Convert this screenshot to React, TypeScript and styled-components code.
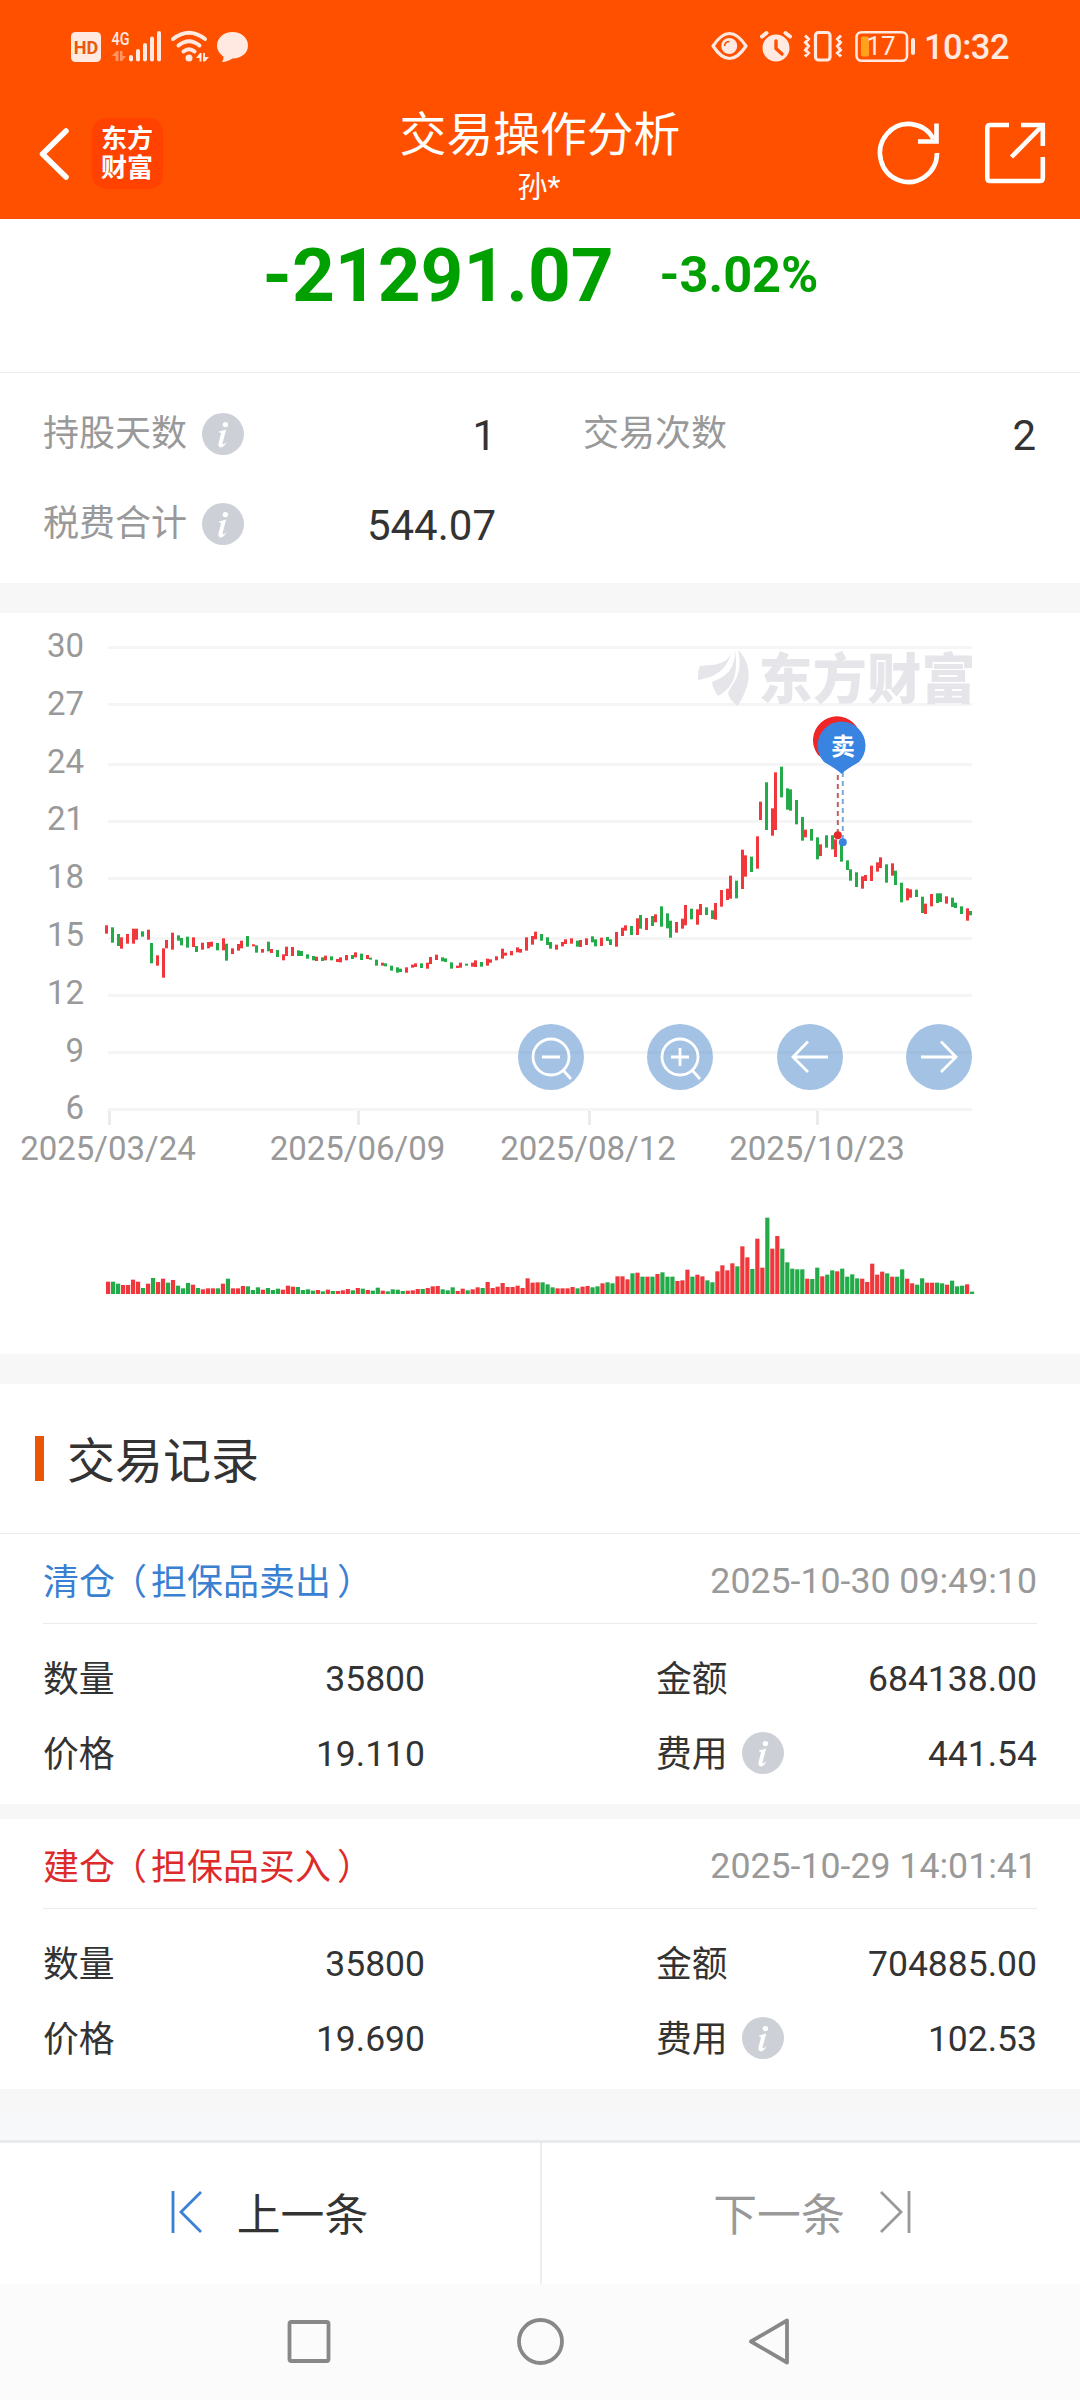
import React from 'react';
import styled, { createGlobalStyle } from 'styled-components';

const GlobalStyle = createGlobalStyle`
  * { box-sizing: border-box; }
  body {
    margin: 0;
    background: #fff;
    font-family: Roboto, "Noto Sans CJK SC", sans-serif;
    color: #333;
  }
`;

const Page = styled.div`
  width: 1080px;
  height: 2400px;
  display: flex;
  flex-direction: column;
  overflow: hidden;
  background: #fff;
`;

/* ---------- header ---------- */

const Header = styled.header`
  height: 219px;
  flex: none;
  background: #ff5000;
  color: #fff;
`;

const StatusBar = styled.div`
  height: 92px;
  display: flex;
  justify-content: space-between;
  padding: 0 0 0 70px;
`;

const StatusIcons = styled.svg`
  display: block;
  height: 92px;
`;

const StatusGroup = styled.div`
  display: flex;
`;

const Clock = styled.span`
  width: 156px;
  font-size: 34.5px;
  font-weight: 500;
  line-height: 94px;
  letter-spacing: -0.5px;
  color: #ffe9e0;
`;

const TitleBar = styled.div`
  height: 127px;
  display: grid;
  grid-template-columns: 380px 1fr 380px;
`;

const TitleLeft = styled.div`
  display: flex;
  align-items: flex-start;
  padding: 26px 0 0 36px;
`;

const BackIcon = styled.svg`
  width: 36px;
  height: 72px;
  margin-right: 20px;
`;

const BrandTile = styled.div`
  width: 71px;
  height: 71px;
  border-radius: 14px;
  background: #ff4200;
  font-size: 26px;
  font-weight: 700;
  line-height: 29px;
  padding: 7px 0 0 9px;
`;

const TitleText = styled.div`
  text-align: center;
  padding-top: 13px;
`;

const Title = styled.h1`
  margin: 0;
  font-size: 46.8px;
  font-weight: 400;
  line-height: 60px;
  white-space: nowrap;
`;

const Account = styled.div`
  font-size: 30px;
  line-height: 40px;
  margin-top: 2px;
  padding-right: 2px;
`;

const TitleActions = styled.svg`
  width: 380px;
  height: 127px;
`;

/* ---------- profit summary ---------- */

const Profit = styled.section`
  height: 154px;
  flex: none;
  display: flex;
  align-items: baseline;
  justify-content: center;
  gap: 46px;
  padding: 13px 0 0 1px;
  color: #00a000;
  font-weight: 700;
  border-bottom: 1px solid #ebebeb;
`;

const Amount = styled.span`
  font-size: 74.7px;
  line-height: 88px;
`;

const Percent = styled.span`
  font-size: 50.5px;
  position: relative;
  top: -9px;
`;

const Stats = styled.section`
  height: 210px;
  flex: none;
  display: grid;
  grid-template-columns: 453px 453px;
  grid-template-rows: 90px 90px;
  column-gap: 87px;
  padding: 16px 43px 14px;
`;

const StatCell = styled.div`
  display: flex;
  align-items: center;
  justify-content: space-between;
`;

const StatLabel = styled.span`
  display: flex;
  align-items: center;
  gap: 15px;
  font-size: 36px;
  line-height: 52px;
  color: #999;
`;

const StatValue = styled.span`
  font-size: 42px;
  line-height: 56px;
  padding-top: 3px;
`;

const InfoSvg = styled.svg`
  width: 42px;
  height: 42px;
  display: block;
`;

const Band = styled.div<{ $h: number }>`
  height: ${(p) => p.$h}px;
  flex: none;
  background: #f7f7f7;
`;

/* ---------- chart ---------- */

const ChartPanel = styled.section`
  position: relative;
  height: 741px;
  flex: none;
`;

const ChartSvg = styled.svg`
  display: block;
  width: 1080px;
  height: 741px;
`;

const ChartTools = styled.div`
  position: absolute;
  left: 518px;
  top: 411px;
  display: flex;
  gap: 63.3px;
`;

const ToolButton = styled.button`
  width: 66px;
  height: 66px;
  padding: 0;
  border: 0;
  border-radius: 50%;
  background: rgba(73, 133, 201, 0.5);
`;

/* ---------- records ---------- */

const RecordsHead = styled.div`
  height: 150px;
  flex: none;
  display: flex;
  align-items: center;
  border-bottom: 1px solid #ebebeb;
  padding-left: 35px;
`;

const Accent = styled.i`
  width: 9px;
  height: 45px;
  background: #e95504;
  margin-right: 23px;
`;

const SectionTitle = styled.h2`
  margin: 0;
  padding-top: 6px;
  font-size: 48px;
  font-weight: 400;
  line-height: 60px;
`;

const Record = styled.article`
  height: 270px;
  flex: none;
  padding: 0 43px;
`;

const RecordTop = styled.div`
  height: 90px;
  display: flex;
  align-items: center;
  justify-content: space-between;
  border-bottom: 1px solid #ebebeb;
  font-size: 36px;
`;

const RecordKind = styled.span<{ $color: string }>`
  display: flex;
  flex: none;
  white-space: nowrap;
  color: ${(p) => p.$color};
`;

const Paren = styled.span<{ $shift: number }>`
  margin-left: ${(p) => p.$shift}px;
  margin-right: ${(p) => -p.$shift}px;
`;

const RecordTime = styled.time`
  color: #999;
  font-size: 35.7px;
  padding-top: 4px;
`;

const RecordGrid = styled.div`
  display: grid;
  grid-template-columns: 382px 381px;
  column-gap: 231px;
  grid-auto-rows: 75px;
  padding-top: 17px;
`;

const Field = styled.div`
  display: flex;
  align-items: center;
  justify-content: space-between;
`;

const FieldLabel = styled.span`
  display: flex;
  align-items: center;
  gap: 14px;
  font-size: 35.8px;
  line-height: 52px;
  padding-top: 2px;

  svg {
    margin-bottom: 3px;
  }
`;

const FieldValue = styled.span`
  font-size: 35.5px;
  line-height: 44px;
`;

/* ---------- bottom ---------- */

const Filler = styled.div`
  height: 29px;
  flex: none;
  background: #f7f8fa;
`;

const Pager = styled.nav`
  height: 144px;
  flex: none;
  display: grid;
  grid-template-columns: 542px 538px;
  border-top: 3px solid #e9eaec;
`;

const PagerButton = styled.div<{ $muted?: boolean }>`
  display: flex;
  align-items: center;
  justify-content: center;
  gap: 35px;
  font-size: 43.8px;
  color: ${(p) => (p.$muted ? '#999' : '#333')};
  padding: ${(p) => (p.$muted ? '0 0 3px 3px' : '0 2px 3px 0')};
  border-right: ${(p) => (p.$muted ? '0' : '2px solid #ededed')};
`;

const PagerIcon = styled.svg`
  width: 32px;
  height: 44px;
`;

const SystemNav = styled.footer`
  flex: 1;
  background: #fbfbfb;
  display: flex;
  justify-content: center;
  padding-top: 33px;
  gap: 182px;
`;

const NavIcon = styled.svg`
  width: 49px;
  height: 49px;
`;

const RED = '#f0383c';
const GREEN = '#22ab48';

/* top-bottom-direction of each trading day, thirds of a pixel from the top gridline area */
const CANDLES =
  '856-881r 862-908g 882-918g 892-926r 882-911r 866-911r 866-899r 874-890g 869-899r 909-970g 946-977r 925-1013r 900-925r 878-929r 886-902g 894-916g 890-923g 892-921r 918-936g 908-929r 906-925r 905-920r 909-931g 895-931r 911-962g 925-942r 912-932r 902-925r 888-920g 913-919r 916-938g 927-938r 905-934g 927-939r 930-951g 943-961r 920-948r 921-948r 931-948g 933-948g 943-956g 948-961g 950-963r 952-963g 947-961r 949-961g 957-966r 952-967r 945-961r 945-957g 937-952r 941-960g 945-957r 953-959g 959-977g 968-977r 970-979g 977-992g 982-998g 986-996g 982-998r 974-983r 970-981r 970-984g 968-986r 951-972r 944-960r 952-964g 955-966g 967-986g 977-984r 968-983r 971-977g 968-980r 961-981r 966-980g 956-977r 958-968r 949-961r 926-956r 938-947r 933-946r 922-937r 927-938r 892-932r 888-914r 875-898r 882-902g 892-915g 906-926g 914-929r 906-919r 898-912r 895-911r 902-920g 900-921r 895-915r 889-907g 898-919g 893-918r 891-903g 898-915g 876-920r 863-888r 856-872r 858-885g 835-885r 825-866g 834-870r 828-858g 823-847r 799-860g 820-865g 842-893g 846-878r 836-866r 795-856r 806-838g 808-854r 792-825r 802-825g 811-837g 789-839r 750-800r 746-780r 707-776r 722-775g 629-747r 646-710r 650-696g 589-686r 485-540r 427-570g 505-587r 397-570r 380-472g 445-509g 448-512g 480-553g 531-602g 569-592r 567-602g 592-658g 613-648r 586-623g 586-628g 598-651r 612-665g 661-690g 688-722g 697-741g 709-746r 705-723r 677-723r 667-695r 652-684r 673-728g 670-707r 692-735g 728-787g 745-781r 748-773r 749-771g 770-819g 791-822r 762-799r 760-789g 760-786g 769-791r 773-801g 788-804g 799-822g 805-842r 813-826g'
    .split(' ')
    .map((s) => {
      const [a, b] = s.slice(0, -1).split('-').map(Number);
      return { top: 27 + a / 3, height: (b - a) / 3, color: s.endsWith('r') ? RED : GREEN };
    });

const VOLUMES =
  '37r 37g 31g 27r 27r 43r 37r 18g 31r 48g 36r 46r 34g 42r 25g 17g 33g 28r 18g 14r 17r 17r 17g 31r 46g 17r 17r 24r 23g 12g 20g 13r 18g 12g 16g 13r 25r 22r 21g 12g 14g 10g 12r 8g 13r 9g 9r 11r 15r 11g 18r 16g 12r 10g 19g 10r 8g 14g 13g 9g 10r 11r 15r 15g 18r 23r 24r 14g 11g 20g 9r 16r 11g 14r 20r 18g 36r 18r 22r 33r 21r 21r 25r 18r 47r 34r 35r 35g 29g 20g 17r 17r 17r 21r 17g 22r 24r 20g 23g 32r 35g 32g 53r 53r 44r 62g 64r 52g 52r 52g 60r 65g 52g 52g 39r 41r 73r 52g 58r 53r 41g 35g 68r 86r 71r 92r 83g 143r 110r 75g 166r 79r 229g 136r 174r 136g 95g 76g 74g 74g 46r 45g 79g 53r 58g 71g 68r 76g 52g 59g 47g 46r 36r 91r 58r 67r 62g 52r 52g 74g 46r 32r 28g 47g 34r 34r 34g 32g 28r 40g 23g 25g 29r 7g'
    .split(' ')
    .map((s) => ({ height: parseInt(s, 10) / 3, color: s.endsWith('r') ? RED : GREEN }));

const GRID = [30, 27, 24, 21, 18, 15, 12, 9, 6];
const GRID_Y = [33, 90, 150, 207, 264, 324, 381, 438, 495];
const DATES = [
  { x: 109.5, textX: 108, label: '2025/03/24' },
  { x: 358.5, textX: 357.5, label: '2025/06/09' },
  { x: 589.5, textX: 588, label: '2025/08/12' },
  { x: 817.5, textX: 817, label: '2025/10/23' },
];

/* candles snap to whole 3px columns */
const candleX = (n: number) => 105 + 3 * Math.ceil((5 * n - (n > 43 ? 1 : 0)) / 3);

const InfoIcon = () => (
  <InfoSvg viewBox="0 0 42 42">
    <circle cx="21" cy="21" r="21" fill="#cdd0d6" />
    <circle cx="23.4" cy="11.6" r="2.7" fill="#fff" />
    <path d="M17 18.6 L24.2 16.6 L20.6 30 Q20.2 32 22.2 31 L24.6 29 Q22 34.6 18.6 34.4 Q15.6 34 16.6 30 L19 20.6 Q19.2 19.4 17 19.6 Z" fill="#fff" />
  </InfoSvg>
);

const Chart = () => (
  <ChartSvg viewBox="0 0 1080 741">
    <g fill="#f5f5f5">
      {GRID_Y.map((y) => (
        <rect key={y} x="108" y={y} width="864" height="3" />
      ))}
    </g>
    <g fill="#ebebeb">
      {DATES.map((d) => (
        <rect key={d.x} x={d.x - 1.5} y="498" width="3" height="14" />
      ))}
    </g>
    <g fill="#999" fontSize="33">
      {GRID.map((v, i) => (
        <text key={v} x="84" y={44 + i * 57.8} textAnchor="end">{v}</text>
      ))}
      {DATES.map((d) => (
        <text key={d.label} x={d.textX} y="547" textAnchor="middle">{d.label}</text>
      ))}
    </g>
    <g fill="#e6e5ea">
      <path d="M732 36.5 C729 51 717 52 700 53 Q698 55 698 67 C714 64 727 59 732 36.5 Z" />
      <path d="M735 37 C735 56 727 63 712 69 Q713 76 718 83 C731 75 739 66 735 37 Z" />
      <path d="M738 37 C748 46 750 59 748 70 Q744 84 737.5 93 C733 89 729 85 728 80 C732 70 744 62 738 37 Z" />
      <text x="758.5" y="86" fontSize="54" fontWeight="900" textLength="217" lengthAdjust="spacing">东方财富</text>
    </g>
    <g>
      {CANDLES.map((c, i) => (
        <rect key={i} x={candleX(i)} y={c.top} width="3" height={c.height} fill={c.color} />
      ))}
    </g>
    <g>
      {VOLUMES.map((v, i) => (
        <rect key={i} x={106 + i * 4.9942} y={681 - v.height} width="4.2" height={v.height} fill={v.color} />
      ))}
    </g>
    <path d="M837.8 162V222" stroke="#c0605c" strokeWidth="2" strokeDasharray="5 4" />
    <path d="M842.8 159V229" stroke="#7ba9df" strokeWidth="2" strokeDasharray="5 4" />
    <circle cx="837.8" cy="222.3" r="4" fill="#e62a2a" />
    <circle cx="842.8" cy="229.3" r="4" fill="#3b84de" />
    <path d="M837 154 L818 142 A24 24 0 1 1 856 142 Z" fill="#f02526" />
    <path d="M841.5 161 Q838 157 824 149 A24 24 0 1 1 859 149 Q845 157 841.5 161 Z" fill="#3884e0" />
    <text x="843" y="142" fontSize="24" fontWeight="700" fill="#fff" textAnchor="middle">卖</text>
  </ChartSvg>
);

type ToolKind = 'out' | 'in' | 'left' | 'right';
const TOOL_PATHS: Record<ToolKind, string> = {
  out: 'M51 33A18 18 0 1 1 15 33A18 18 0 1 1 51 33M45 46L53 55M24 33H42',
  in: 'M51 33A18 18 0 1 1 15 33A18 18 0 1 1 51 33M45 46L53 55M24 33H42M33 24V42',
  left: 'M51 33H16M31 17.5L16 33L31 48',
  right: 'M15 33H50M35 17.5L50 33L35 48',
};

const Tool = ({ kind }: { kind: ToolKind }) => (
  <ToolButton>
    <svg width="66" height="66" viewBox="0 0 66 66" fill="none" stroke="#fff" strokeWidth="2.8">
      <path d={TOOL_PATHS[kind]} />
    </svg>
  </ToolButton>
);

type RecordData = {
  kind: string;
  channel: string;
  color: string;
  time: string;
  qty: string;
  amount: string;
  price: string;
  fee: string;
};

const TradeRecord = ({ r }: { r: RecordData }) => (
  <Record>
    <RecordTop>
      <RecordKind $color={r.color}>
        {r.kind}
        <Paren $shift={-4}>（</Paren>
        {r.channel}
        <Paren $shift={6}>）</Paren>
      </RecordKind>
      <RecordTime>{r.time}</RecordTime>
    </RecordTop>
    <RecordGrid>
      <Field><FieldLabel>数量</FieldLabel><FieldValue>{r.qty}</FieldValue></Field>
      <Field><FieldLabel>金额</FieldLabel><FieldValue>{r.amount}</FieldValue></Field>
      <Field><FieldLabel>价格</FieldLabel><FieldValue>{r.price}</FieldValue></Field>
      <Field><FieldLabel>费用<InfoIcon /></FieldLabel><FieldValue>{r.fee}</FieldValue></Field>
    </RecordGrid>
  </Record>
);

const TINT = '#ffe9e0';

export default function App() {
  return (
    <>
      <GlobalStyle />
      <Page>
        <Header>
          <StatusBar>
            <StatusIcons width="190" viewBox="70 0 190 92" fill={TINT}>
              <rect x="71" y="32" width="30" height="30" rx="4.5" />
              <text x="86" y="53.8" fontSize="18.5" fontWeight="700" fill="#e8590c" textAnchor="middle" textLength="24.5" lengthAdjust="spacingAndGlyphs">HD</text>
              <text x="111.5" y="44.5" fontSize="18.5" fontWeight="500" textLength="18" lengthAdjust="spacingAndGlyphs">4G</text>
              <g opacity="0.45">
                <path d="M112 56L116.5 51H118.500V61H115.500V56Z" />
                <path d="M120 51H122.500V56H126L122 61H120Z" />
              </g>
              <rect x="129" y="55" width="4" height="6.500" rx="2" />
              <rect x="136" y="49" width="4" height="12.500" rx="2" />
              <rect x="143" y="43" width="4" height="18.500" rx="2" />
              <rect x="150" y="36.500" width="4" height="25" rx="2" />
              <rect x="157" y="31" width="4" height="30.500" rx="2" />
              <g fill="none" stroke={TINT} strokeWidth="4" strokeLinecap="round">
                <path d="M173 39Q189 26.500 205 39" />
                <path d="M178.500 45.500Q189 37 199.500 45.500" />
                <path d="M183.500 51.500Q189 47 194.500 51.500" />
              </g>
              <circle cx="189" cy="58" r="3.500" />
              <path d="M196 58L200 53H201.500V61.500H199.500V58Z M203 53H205V57H209L205 61.500H203Z" />
              <path d="M232.500 32C241.500 32 248 38 248 45.500C248 53 241.500 58.500 232.500 58.500C229 60.500 226 62 222 62Q224 59 223.500 56.500C219.500 54 217 50 217 45.500C217 38 223.500 32 232.500 32Z" />
            </StatusIcons>
            <StatusGroup>
              <StatusIcons width="214" viewBox="710 0 214 92" fill={TINT}>
                <path d="M713 46Q729.500 21 746 46Q729.500 71 713 46Z" fill="none" stroke={TINT} strokeWidth="3.200" strokeLinejoin="round" />
                <circle cx="729.200" cy="46" r="8" />
                <path d="M724.500 46Q725 41.500 729.500 41.500" fill="none" stroke="#ff5000" strokeWidth="1.600" />
                <circle cx="776" cy="48" r="13.500" />
                <path d="M776 41V48.500L782 54" fill="none" stroke="#ff5000" strokeWidth="3.400" strokeLinecap="round" />
                <path d="M762 36.500L766.500 33M785.500 33L790 36.500" fill="none" stroke={TINT} strokeWidth="4" strokeLinecap="round" />
                <rect x="815.500" y="32.500" width="14.500" height="27.500" rx="3" fill="none" stroke={TINT} strokeWidth="3.200" />
                <path d="M805 35.500L808.500 39L805.500 42.500L808.500 46L805.500 50L808.500 53L805 56.500M841 35.500L837.500 39L840.500 42.500L837.500 46L840.500 50L837.500 53L841 56.500" fill="none" stroke={TINT} strokeWidth="3" />
                <rect x="856.500" y="32.200" width="50.500" height="28.500" rx="5" fill="none" stroke={TINT} strokeWidth="2.600" />
                <rect x="911" y="38" width="4" height="17" rx="2" />
                <rect x="861" y="36.500" width="8" height="20" rx="2" fill="#ffa21c" />
                <text x="881" y="55" fontSize="26" textAnchor="middle">17</text>
              </StatusIcons>
              <Clock>10:32</Clock>
            </StatusGroup>
          </StatusBar>
          <TitleBar>
            <TitleLeft>
              <BackIcon viewBox="36 118 36 72" fill="none" stroke="#fff" strokeWidth="5.500" strokeLinecap="round" strokeLinejoin="round">
                <path d="M66 131L42.500 154L66 177" />
              </BackIcon>
              <BrandTile>东方<br />财富</BrandTile>
            </TitleLeft>
            <TitleText>
              <Title>交易操作分析</Title>
              <Account>孙*</Account>
            </TitleText>
            <TitleActions viewBox="700 92 380 127" fill="none" stroke="#fff" strokeWidth="4.600">
              <path d="M937 153A28.500 29 0 1 1 933.500 139" />
              <path d="M936.500 123.500V141.500H918" />
              <path d="M1009 125H990Q987.300 125 987.300 128V178Q987.300 181 990 181H1040Q1042.800 181 1042.800 178V157" />
              <path d="M1021 125H1042.800V146M1042.500 125.500L1011.500 157" />
            </TitleActions>
          </TitleBar>
        </Header>

        <Profit>
          <Amount>-21291.07</Amount>
          <Percent>-3.02%</Percent>
        </Profit>
        <Stats>
          <StatCell><StatLabel>持股天数<InfoIcon /></StatLabel><StatValue>1</StatValue></StatCell>
          <StatCell><StatLabel>交易次数</StatLabel><StatValue>2</StatValue></StatCell>
          <StatCell><StatLabel>税费合计<InfoIcon /></StatLabel><StatValue>544.07</StatValue></StatCell>
        </Stats>
        <Band $h={30} />

        <ChartPanel>
          <Chart />
          <ChartTools>
            <Tool kind="out" />
            <Tool kind="in" />
            <Tool kind="left" />
            <Tool kind="right" />
          </ChartTools>
        </ChartPanel>
        <Band $h={30} />

        <RecordsHead>
          <Accent />
          <SectionTitle>交易记录</SectionTitle>
        </RecordsHead>
        <TradeRecord r={{ kind: '清仓', channel: '担保品卖出', color: '#3a80d2', time: '2025-10-30 09:49:10', qty: '35800', amount: '684138.00', price: '19.110', fee: '441.54' }} />
        <Band $h={15} />
        <TradeRecord r={{ kind: '建仓', channel: '担保品买入', color: '#dd2a2a', time: '2025-10-29 14:01:41', qty: '35800', amount: '704885.00', price: '19.690', fee: '102.53' }} />
        <Band $h={22} />
        <Filler />

        <Pager>
          <PagerButton>
            <PagerIcon viewBox="0 0 32 44" fill="none" stroke="#3a80d2" strokeWidth="2.800">
              <path d="M3 1V43M31 2L11 22L31 42" />
            </PagerIcon>
            上一条
          </PagerButton>
          <PagerButton $muted>
            下一条
            <PagerIcon viewBox="0 0 32 44" fill="none" stroke="#999" strokeWidth="2.800">
              <path d="M29 1V43M1 2L21 22L1 42" />
            </PagerIcon>
          </PagerButton>
        </Pager>
        <SystemNav>
          <NavIcon viewBox="0 0 49 49" fill="none" stroke="#888" strokeWidth="3.800">
            <rect x="4.500" y="5" width="39" height="39" rx="2" />
          </NavIcon>
          <NavIcon viewBox="0 0 49 49" fill="none" stroke="#888" strokeWidth="3.800">
            <circle cx="24.500" cy="24.500" r="21.500" />
          </NavIcon>
          <NavIcon viewBox="0 0 49 49" fill="none" stroke="#888" strokeWidth="3.800" strokeLinejoin="round">
            <path d="M40 3.500V45.500L4 24.500Z" />
          </NavIcon>
        </SystemNav>
      </Page>
    </>
  );
}
